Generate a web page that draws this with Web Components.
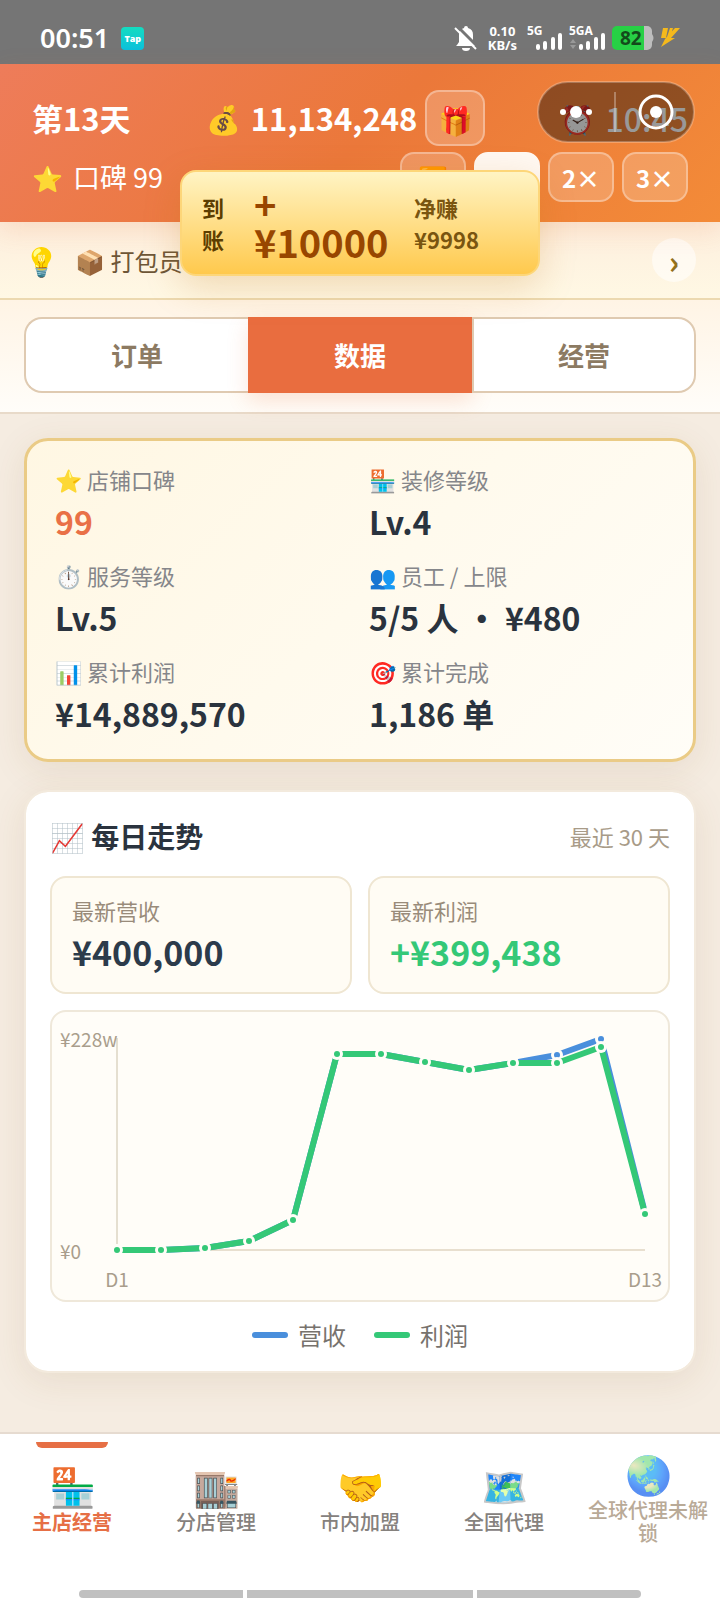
<!DOCTYPE html>
<html lang="zh-CN">
<head>
<meta charset="utf-8">
<meta name="viewport" content="width=device-width, initial-scale=1">
<title>主店经营</title>
<style>
  body {
    margin: 0;
    font-family: "Noto Sans CJK SC", sans-serif;
    color: #2a333e;
    background: #f5ece1;
  }
</style>
</head>
<body>
<shop-app></shop-app>

<script>
class BaseElement extends HTMLElement {
  constructor() {
    super();
    this.root = this.attachShadow({ mode: "open" });
  }
  connectedCallback() {
    this.root.innerHTML = this.render();
  }
}

class StatusBar extends BaseElement {
  render() {
    return `
      <style>
        :host {
          display: flex;
          align-items: center;
          justify-content: space-between;
          box-sizing: border-box;
          height: 64px;
          padding: 12px 40px 0;
          background: #757575;
          color: #fff;
        }
        .left, .right { display: flex; align-items: center; }
        .left { gap: 12px; }
        .right { gap: 6px; }
        .clock { font: 600 27px/32px "Noto Sans", sans-serif; }
        .tap {
          width: 23px;
          border-radius: 4px;
          background: linear-gradient(#14dcc0, #0cc0dc);
          font: 800 9px/23px "Open Sans", sans-serif;
          text-align: center;
        }
        .speed { margin: 0 4px; font: 700 13px/14px "Noto Sans", sans-serif; text-align: center; }
        svg { display: block; overflow: visible; }
        text { font: 700 12px "Noto Sans", sans-serif; fill: #fff; }
        text.level { font: 700 19px "Noto Sans", sans-serif; fill: #134a1b; }
      </style>
      <div class="left">
        <span class="clock">00:51</span>
        <span class="tap">Tap</span>
      </div>
      <div class="right">
        <svg width="24" height="26" viewBox="0 0 24 26">
          <path d="M3 20l2-3V10a7 7 0 0 1 5-7 2 2 0 0 1 4 0 7 7 0 0 1 5 7v7l3 3v1H2z" fill="#fff"/>
          <path d="M8 23h8a4 3 0 0 1-8 0z" fill="#fff"/>
          <path d="M3 1l21 21" stroke="#757575" stroke-width="3"/>
          <path d="M1 3l21 21" stroke="#fff" stroke-width="2"/>
        </svg>
        <span class="speed">0.10<br>KB/s</span>
        <svg width="36" height="26" viewBox="0 0 36 26">
          <text x="0" y="10">5G</text>
          <path d="M11 23v-2M18 23v-5M26 23v-9M33 23V10" stroke="#fff" stroke-width="4" stroke-linecap="round"/>
        </svg>
        <svg width="37" height="26" viewBox="0 0 37 26">
          <text x="0" y="10">5GA</text>
          <path d="M1 18l3-4 3 4zM1 20l3 4 3-4z" fill="#999"/>
          <path d="M12 23v-2M19 23v-5M27 23v-9M34 23V10" stroke="#fff" stroke-width="4" stroke-linecap="round"/>
        </svg>
        <svg width="68" height="26" viewBox="0 0 68 26">
          <path d="M32 1h3a5 5 0 0 1 5 5v14a5 5 0 0 1-5 5h-3z" fill="#bdbdbd"/>
          <path d="M40 9q3 4 0 8z" fill="#bdbdbd"/>
          <path d="M5 1h27v24H5a5 5 0 0 1-5-5V6a5 5 0 0 1 5-5z" fill="#27d045"/>
          <text class="level" x="8" y="20">82</text>
          <path d="M51 3h5l-2 10h-5zM58 3h3l-3 9h-3zM63 3h5l-9 10h4l-14 9 4-8z" fill="#f5b91c"/>
        </svg>
      </div>
    `;
  }
}

class GameHeader extends BaseElement {
  render() {
    return `
      <style>
        :host {
          display: block;
          padding: 26px 32px 20px;
          color: #fff;
          background: linear-gradient(135deg, #ee7c5a, #eb783a 50%, #f38b38);
          box-shadow: 0 8px 24px rgba(226, 112, 54, .15);
        }
        .row, .group, .value { display: flex; align-items: center; }
        .row { justify-content: space-between; }
        .row + .row { margin-top: 6px; }
        .group { gap: 8px; }
        .value { gap: 10px; }
        .main { font-size: 31px; line-height: 44px; font-weight: 700; }
        .main .emoji { font-size: 28px; }
        .main .time { font-size: 32px; font-weight: 500; }
        .rating { font-size: 27px; line-height: 40px; }
        .rating .emoji { font-size: 25px; }
        button {
          box-sizing: border-box;
          height: 50px;
          width: 66px;
          padding: 2px 0 0;
          border: 2px solid rgba(255, 255, 255, .32);
          border-radius: 14px;
          background: rgba(255, 255, 255, .2);
          color: #fff;
          font: 700 24px/32px "Noto Sans CJK SC", sans-serif;
        }
        button.gift { width: 60px; height: 56px; font-size: 28px; }
        button.on { background: #fff8f2; color: #e96c3f; border-color: #fff8f2; }
      </style>
      <div class="row main">
        <span>第13天</span>
        <span class="group">
          <span class="value"><span class="emoji">💰</span>11,134,248</span>
          <button class="gift" aria-label="礼物">🎁</button>
        </span>
        <span class="value time"><span class="emoji">⏰</span>10:45</span>
      </div>
      <div class="row">
        <span class="rating value"><span class="emoji">⭐</span>口碑 99</span>
        <span class="group">
          <button aria-label="暂停">⏸️</button>
          <button class="on">1×</button>
          <button>2×</button>
          <button>3×</button>
        </span>
      </div>
    `;
  }
}

// Floating host capsule: menu dots on the left, close target on the right
class HostCapsule extends BaseElement {
  render() {
    return `
      <style>
        :host {
          position: absolute;
          z-index: 2;
          top: 81px;
          right: 25px;
          width: 158px;
        }
        svg { display: block; }
      </style>
      <svg width="158" height="62" viewBox="0 0 158 62">
        <rect x="1" y="1" width="156" height="60" rx="30" fill="#000" fill-opacity=".4" stroke="#fff" stroke-opacity=".25" stroke-width="2"/>
        <path d="M78 11v40" stroke="#fff" stroke-opacity=".3" stroke-width="2"/>
        <g fill="#fff">
          <circle cx="26" cy="31" r="3"/>
          <circle cx="39" cy="31" r="6"/>
          <circle cx="52" cy="31" r="3"/>
          <circle cx="119" cy="31" r="6"/>
        </g>
        <circle cx="119" cy="31" r="16" fill="none" stroke="#fff" stroke-width="3"/>
      </svg>
    `;
  }
}

class IncomeToast extends BaseElement {
  render() {
    return `
      <style>
        :host {
          position: absolute;
          z-index: 2;
          top: 170px;
          left: 25%;
          right: 25%;
          display: flex;
          align-items: center;
          box-sizing: border-box;
          padding: 13px 20px;
          gap: 30px;
          border: 2px solid #fdd679;
          border-radius: 16px;
          background: linear-gradient(#fff4c4, #ffc94d);
          box-shadow: 0 12px 36px rgba(190, 120, 20, .22);
          font-weight: 700;
          font-size: 22px;
          line-height: 32px;
        }
        .tag { width: 22px; color: #5c3d00; }
        .sum { width: 130px; color: #984600; font-size: 38px; line-height: 38px; }
        .net { color: #7a5510; }
      </style>
      <span class="tag">到账</span>
      <span class="sum">+<br>¥10000</span>
      <span class="net">净赚<br>¥9998</span>
    `;
  }
}

class TipBar extends BaseElement {
  render() {
    return `
      <style>
        :host {
          display: flex;
          align-items: center;
          box-sizing: border-box;
          height: 78px;
          padding: 0 24px;
          gap: 16px;
          border-bottom: 2px solid #ecd9b0;
          background: linear-gradient(#fdeedd, #fff8e4);
          font-size: 24px;
          color: #6d5637;
        }
        .bulb { font-size: 28px; }
        .text { flex: 1; white-space: nowrap; overflow: hidden; }
        button {
          width: 44px;
          height: 44px;
          padding: 0;
          border: 0;
          border-radius: 50%;
          background: rgba(255, 255, 255, .55);
          color: #94701a;
          font: 700 32px/44px "Noto Sans CJK SC", sans-serif;
        }
      </style>
      <span class="bulb">💡</span>
      <span class="text">📦 打包员</span>
      <button aria-label="下一条">›</button>
    `;
  }
}

class TabBar extends BaseElement {
  render() {
    const tabs = ["订单", "数据", "经营"];
    return `
      <style>
        :host {
          display: block;
          padding: 17px 24px 19px;
          border-bottom: 2px solid #e8dac9;
          background: linear-gradient(#fff4e5, #fffdf9);
        }
        div { display: grid; grid-template-columns: repeat(3, 1fr); }
        button {
          box-sizing: border-box;
          height: 76px;
          padding: 0;
          border: 2px solid #dfcab1;
          background: #fff;
          color: #8c7a62;
          font: 700 26px/36px "Noto Sans CJK SC", sans-serif;
        }
        button:first-child { border-right: 0; border-radius: 18px 0 0 18px; }
        button:last-child { border-radius: 0 18px 18px 0; }
        button[aria-selected="true"] {
          border-color: #e96d3f;
          background: #e96d3f;
          color: #fff;
          box-shadow: 0 8px 20px rgba(233, 109, 63, .18);
        }
      </style>
      <div role="tablist">
        ${tabs.map(t => `<button role="tab" aria-selected="${t === "数据"}">${t}</button>`).join("")}
      </div>
    `;
  }
}

class StatItem extends BaseElement {
  render() {
    return `
      <style>
        :host { display: block; white-space: nowrap; }
        .label { font-size: 22px; line-height: 36px; color: var(--label, #85868a); }
        .value { font-size: var(--size, 32px); line-height: 48px; font-weight: 700; }
      </style>
      <div class="label">${this.getAttribute("label")}</div>
      <div class="value"><slot></slot></div>
    `;
  }
}

class StatCard extends BaseElement {
  render() {
    return `
      <style>
        :host {
          display: grid;
          grid-template-columns: 1fr 1fr;
          gap: 12px 18px;
          padding: 20px 28px 22px;
          border: 3px solid #eacb86;
          border-radius: 24px;
          background: linear-gradient(135deg, #fff7e3, #fffdf7);
          box-shadow: 0 8px 36px rgba(120, 80, 30, .1);
        }
        .hot { color: #e97046; }
      </style>
      <stat-item label="⭐ 店铺口碑"><span class="hot">99</span></stat-item>
      <stat-item label="🏪 装修等级">Lv.4</stat-item>
      <stat-item label="⏱️ 服务等级">Lv.5</stat-item>
      <stat-item label="👥 员工 / 上限">5/5 人 · ¥480</stat-item>
      <stat-item label="📊 累计利润">¥14,889,570</stat-item>
      <stat-item label="🎯 累计完成">1,186 单</stat-item>
    `;
  }
}

class TrendChart extends BaseElement {
  render() {
    const profit = [238, 238, 236, 229, 208, 42, 42, 50, 58, 51, 51, 35, 202];
    const revenue = [238, 238, 236, 229, 208, 42, 42, 50, 58, 51, 43, 27, 201];
    const line = (ys, color) => {
      const pts = ys.map((y, i) => [65 + i * 44, y]);
      return `
        <polyline points="${pts.join(" ")}" fill="none" stroke="${color}" stroke-width="6" stroke-linejoin="round" stroke-linecap="round"/>
        ${pts.map(([x, y]) => `
          <circle cx="${x}" cy="${y}" r="6" fill="#fffdf8"/>
          <circle cx="${x}" cy="${y}" r="3" fill="${color}"/>
        `).join("")}
      `;
    };
    return `
      <style>
        :host {
          display: block;
          border: 2px solid #efe8da;
          border-radius: 16px;
          background: #fffdf8;
        }
        svg { display: block; width: 100%; }
        text { font-size: 19px; fill: #a99d8c; }
      </style>
      <svg viewBox="0 0 616 288" role="img" aria-label="每日走势">
        <clipPath id="plot"><rect x="50" y="24" width="566" height="230"/></clipPath>
        <path d="M65 26v206" stroke="#e5dfd0" stroke-width="2"/>
        <path d="M65 238h528" stroke="#e8dfcf" stroke-width="2"/>
        <text x="8" y="35">¥228w</text>
        <text x="8" y="247">¥0</text>
        <text x="65" y="275" text-anchor="middle">D1</text>
        <text x="593" y="275" text-anchor="middle">D13</text>
        <g clip-path="url(#plot)">
          ${line(revenue, "#4a8fdc")}
          ${line(profit, "#34c877")}
        </g>
      </svg>
    `;
  }
}

class TrendCard extends BaseElement {
  render() {
    return `
      <style>
        :host {
          display: block;
          padding: 24px 24px 18px;
          border: 2px solid #f3eadd;
          border-radius: 24px;
          background: #fff;
          background-clip: padding-box;
          box-shadow: 0 8px 36px rgba(120, 80, 30, .1);
        }
        header { display: flex; align-items: center; justify-content: space-between; }
        h2 { margin: 0; font-size: 28px; line-height: 40px; font-weight: 700; }
        .range { font-size: 22px; color: #a89b88; }
        .pair {
          display: grid;
          grid-template-columns: 1fr 1fr;
          gap: 16px;
          margin: 20px 0 16px;
        }
        stat-item {
          --label: #998b7a;
          --size: 34px;
          padding: 14px 20px 16px;
          border: 2px solid #efe6d2;
          border-radius: 16px;
          background: #fffcf4;
          color: #2c3b4b;
        }
        .up { color: #34c877; }
        .legend {
          display: flex;
          justify-content: center;
          gap: 28px;
          margin-top: 15px;
          font-size: 24px;
          line-height: 36px;
          color: #77726d;
        }
        .legend span { display: flex; align-items: center; gap: 10px; }
        .legend i { width: 36px; height: 6px; border-radius: 3px; background: #4a8fdc; }
        .legend i.green { background: #34c877; }
      </style>
      <header>
        <h2>📈 每日走势</h2>
        <span class="range">最近 30 天</span>
      </header>
      <div class="pair">
        <stat-item label="最新营收">¥400,000</stat-item>
        <stat-item label="最新利润"><span class="up">+¥399,438</span></stat-item>
      </div>
      <trend-chart></trend-chart>
      <div class="legend">
        <span><i></i>营收</span>
        <span><i class="green"></i>利润</span>
      </div>
    `;
  }
}

class NavItem extends BaseElement {
  render() {
    return `
      <style>
        :host { display: flex; flex: 1; min-width: 0; }
        a {
          flex: 1;
          display: flex;
          flex-direction: column;
          align-items: center;
          justify-content: center;
          padding: 0 8px;
          position: relative;
          color: #85817d;
          font-size: 20px;
          line-height: 23px;
          font-weight: 500;
          text-align: center;
          text-decoration: none;
        }
        .icon { margin-bottom: 6px; font-size: 38px; line-height: 38px; }
        :host([active]) a { color: #e66f45; font-weight: 700; }
        :host([active]) a::before {
          content: "";
          position: absolute;
          top: 0;
          left: 25%;
          right: 25%;
          height: 6px;
          border-radius: 0 0 6px 6px;
          background: #e66f45;
        }
        :host([locked]) a { color: #b9aa97; }
        :host([locked]) .icon { opacity: .7; }
      </style>
      <a href="#"><span class="icon">${this.getAttribute("icon")}</span><span><slot></slot></span></a>
    `;
  }
}

class BottomNav extends BaseElement {
  render() {
    return `
      <style>
        :host {
          display: block;
          margin-top: auto;
          border-top: 2px solid #e6dbd0;
          background: #fff;
        }
        nav { display: flex; height: 114px; padding: 8px 0 34px; }
        .gesture { display: flex; gap: 4px; width: 78%; height: 8px; margin: 0 auto 2px; }
        .gesture i { flex: 164; background: #c0c0c0; }
        .gesture i:nth-child(2) { flex: 226; }
        .gesture i:first-child { border-radius: 4px 0 0 4px; }
        .gesture i:last-child { border-radius: 0 4px 4px 0; }
      </style>
      <nav>
        <nav-item icon="🏪" active>主店经营</nav-item>
        <nav-item icon="🏬">分店管理</nav-item>
        <nav-item icon="🤝">市内加盟</nav-item>
        <nav-item icon="🗺️">全国代理</nav-item>
        <nav-item icon="🌏" locked>全球代理未解锁</nav-item>
      </nav>
      <div class="gesture"><i></i><i></i><i></i></div>
    `;
  }
}

class ShopApp extends BaseElement {
  render() {
    return `
      <style>
        :host {
          display: flex;
          flex-direction: column;
          min-height: 100vh;
          position: relative;
        }
        game-header { z-index: 1; position: relative; }
        main {
          display: flex;
          flex-direction: column;
          gap: 28px;
          padding: 24px;
        }
      </style>
      <status-bar></status-bar>
      <game-header></game-header>
      <tip-bar></tip-bar>
      <tab-bar></tab-bar>
      <main>
        <stat-card></stat-card>
        <trend-card></trend-card>
      </main>
      <bottom-nav></bottom-nav>
      <host-capsule></host-capsule>
      <income-toast></income-toast>
    `;
  }
}

customElements.define("status-bar", StatusBar);
customElements.define("game-header", GameHeader);
customElements.define("host-capsule", HostCapsule);
customElements.define("income-toast", IncomeToast);
customElements.define("tip-bar", TipBar);
customElements.define("tab-bar", TabBar);
customElements.define("stat-item", StatItem);
customElements.define("stat-card", StatCard);
customElements.define("trend-chart", TrendChart);
customElements.define("trend-card", TrendCard);
customElements.define("nav-item", NavItem);
customElements.define("bottom-nav", BottomNav);
customElements.define("shop-app", ShopApp);
</script>
</body>
</html>
